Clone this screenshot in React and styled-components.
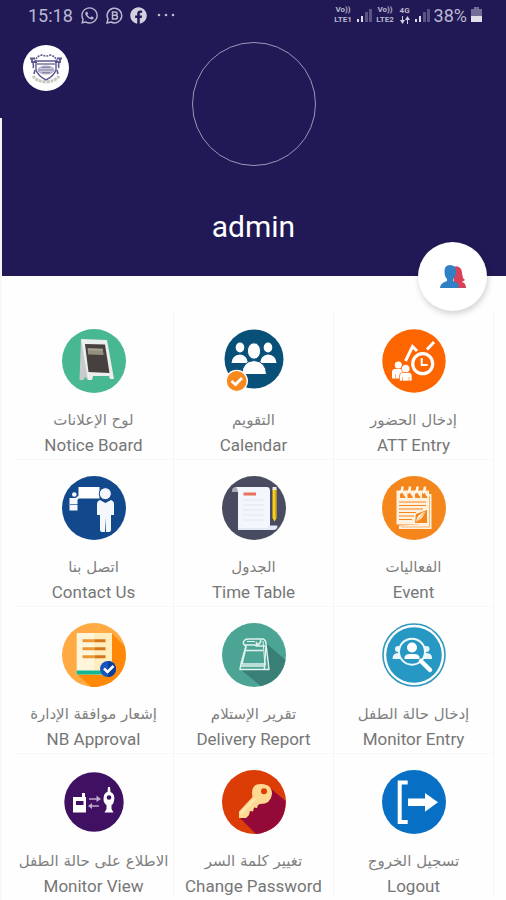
import React from 'react';
import styled, { createGlobalStyle } from 'styled-components';
import { FaWhatsapp, FaFacebook } from 'react-icons/fa';

const GlobalStyle = createGlobalStyle`
  * {
    box-sizing: border-box;
  }

  body {
    margin: 0;
    background: #fefefe;
    font-family: Roboto, 'DejaVu Sans', sans-serif;
  }
`;

const Page = styled.div`
  width: 100%;
  min-height: 100vh;
  border-left: 2px solid #f8f8f9;
`;

const Header = styled.header`
  position: relative;
  display: flex;
  flex-direction: column;
  height: 276px;
  margin-left: -2px;
  background-color: #201955;
  color: #fff;
`;

const StatusBar = styled.div`
  display: flex;
  justify-content: space-between;
  align-items: center;
  height: 30px;
  padding: 0 24px 0 28px;
  color: #bbb8cf;
  font-size: 18px;
`;

const StatusGroup = styled.div`
  display: flex;
  align-items: center;
  gap: ${(props) => props.$gap}px;

  svg {
    display: block;
    flex: none;
  }
`;

const NetworkLabel = styled.span`
  display: flex;
  flex-direction: column;
  align-items: center;
  min-width: ${(props) => props.$width}px;
  font-size: 8px;
  line-height: 10px;
  font-weight: 700;
`;

const HeaderBody = styled.div`
  display: grid;
  grid-template-columns: 46px 1fr 46px;
  padding: 12px 22px 0 23px;
`;

const LogoBadge = styled.div`
  width: 46px;
  height: 46px;
  margin-top: 3px;
  border-radius: 50%;
  background-color: #fff;
`;

const Profile = styled.div`
  display: flex;
  flex-direction: column;
  align-items: center;
`;

const Avatar = styled.div`
  width: 124px;
  height: 124px;
  border: 1px solid #9a96b8;
  border-radius: 50%;
`;

const UserName = styled.h1`
  margin: 43px 0 0;
  font-size: 30px;
  line-height: 36px;
  font-weight: 400;
`;

const ScrollMark = styled.div`
  position: absolute;
  left: 0;
  top: 118px;
  bottom: 0;
  width: 2px;
  background-color: #f4f4f8;
`;

const UsersButton = styled.button`
  position: absolute;
  right: 19px;
  bottom: -35px;
  display: flex;
  align-items: center;
  justify-content: center;
  width: 69px;
  height: 69px;
  padding: 0;
  border: 0;
  border-radius: 50%;
  background-color: #fff;
  box-shadow: 1px 3px 6px rgba(0, 0, 0, 0.18);
  cursor: pointer;
`;

const MenuGrid = styled.nav`
  display: grid;
  grid-template-columns: repeat(3, 1fr);
  padding: 37px 12px 0;
`;

const MenuItem = styled.button`
  display: flex;
  flex-direction: column;
  align-items: center;
  min-height: 147px;
  min-width: 0;
  padding: 16px 0 0;
  border: 0;
  border-right: 1px solid #f6f6f6;
  border-bottom: 1px solid #f8f8f8;
  background: none;
  color: #767676;
  font-family: inherit;
  font-size: 17px;
  line-height: 24px;
  white-space: nowrap;
  cursor: pointer;

  &:nth-last-child(-n + 3) {
    min-height: 0;
    border-bottom: 0;
  }

  svg {
    display: block;
    flex: none;
    margin-bottom: 15px;
  }
`;

const ArabicLabel = styled.span`
  font-family: 'DejaVu Sans', sans-serif;
  font-size: 15px;
  color: #808080;
`;

const Label = styled.span`
  margin-top: 1px;
`;

const Icon = ({ children }) => (
    <svg width="64" height="64" viewBox="0 0 64 64" aria-hidden="true">
        {children}
    </svg>
);

const SignalBars = () => (
    <svg width="15" height="14" viewBox="0 0 15 14" aria-hidden="true">
        <path d="M0 11h2v3H0zM4 8h2v6H4z" fill="#dddbe8" />
        <path d="M8 4h3v10H8zM12 1h3v13h-3z" fill="#5a5483" />
    </svg>
);

const SchoolCrest = () => (
    <svg width="46" height="46" viewBox="0 0 46 46" aria-hidden="true">
        <g fill="none" stroke="#5b5790">
            <path d="M12 17Q13 11 19 10Q23 12 27 10Q33 11 34 17" strokeWidth="1.6" strokeDasharray="2 1" />
            <path d="M7 13.500h5M34 13.500h5M9 14v3h5M37 14v3h-5" strokeWidth="1.800" />
            <path d="M13 16h20v9q-2 6-10 10q-8-4-10-10z" strokeWidth="1.400" />
            <path d="M10 18q1 3 0 5M36 18q-1 3 0 5M12 25l-1 4M34 25l1 4" strokeWidth="1.600" />
            <path d="M14 19h18" stroke="#77739f" strokeWidth="1.500" />
        </g>
        <ellipse cx="23" cy="25" rx="8" ry="4" fill="#c9c8d9" stroke="#8582a8" strokeWidth=".7" />
        <path d="M16 25h14M19 22.500h8M19 27.500h8" stroke="#77749e" strokeWidth=".8" />
        <path d="M10 31q3 5 13 6q10-1 13-6" fill="none" stroke="#c8c7c2" strokeWidth="3" strokeDasharray="3 .8" />
    </svg>
);

const NoticeBoardIcon = () => (
    <Icon>
        <circle cx="32" cy="32" r="32" fill="#48b892" />
        <path d="M19 10L17.500 51h4l1.500-3L26 51h2L26 12z" fill="#c8cbcb" />
        <path d="M19 10l26 1l7 39h-4l-1-3H31l-1 4h-4z" fill="#eceded" />
        <path d="M23 15l20 .5L47.500 44L26.500 43z" fill="#46413f" />
        <path d="M25.500 19l15 .5l1.200 6.500l-15.500-.5z" fill="#958f80" />
        <path d="M26.500 20.500l14.500.5" stroke="#aaa494" strokeWidth="1.500" />
    </Icon>
);

const CalendarIcon = () => (
    <Icon>
        <circle cx="32" cy="30" r="29.500" fill="#085078" />
        <g fill="#fff">
            <ellipse cx="18" cy="18.500" rx="4.300" ry="5" />
            <ellipse cx="46" cy="18.500" rx="4.300" ry="5" />
            <path d="M9.500 34q.5-8 8.500-8.500q7 .5 8 8.500zM38 34q1-8 8-8.500q8 .5 8.500 8.500z" />
            <path d="M20 45.500q0-13 12-14q12 1 12.500 14z" stroke="#085078" strokeWidth="1" />
            <ellipse cx="32" cy="22" rx="6.600" ry="8.200" stroke="#085078" strokeWidth="1" />
        </g>
        <circle cx="14.700" cy="52" r="11.300" fill="#fff" />
        <circle cx="14.700" cy="52" r="9.900" fill="#f7891f" />
        <path d="M9.500 52l4 3.500l6.500-6.500" fill="none" stroke="#fff" strokeWidth="2.800" />
    </Icon>
);

const AttendanceIcon = () => (
    <Icon>
        <circle cx="32" cy="32" r="31.700" fill="#fd6500" />
        <g fill="none" stroke="#fff" strokeWidth="3">
            <path d="M23.500 32l7-14.500l4.500 4.500M45 20.500l7-7.500" />
            <circle cx="40.700" cy="34.700" r="10" strokeWidth="3.200" />
            <path d="M39.700 29v7h6" strokeWidth="2" />
        </g>
        <g fill="#fff">
            <circle cx="16.300" cy="36" r="3.600" />
            <path d="M10 49.500v-6.500q0-3 3-3h7q2 0 2 3v6.500z" />
            <circle cx="23.700" cy="39.700" r="4.300" stroke="#fd6500" strokeWidth=".7" />
            <path d="M17.500 52v-5q0-3.500 3-3.500h6.500q3 0 3 3.500v5z" stroke="#fd6500" strokeWidth=".7" />
        </g>
        <path d="M13.500 45v4M20.500 48v4M27 48v4" stroke="#fd6500" strokeWidth=".5" />
    </Icon>
);

const ContactIcon = () => (
    <Icon>
        <circle cx="32" cy="32" r="32" fill="#12498c" />
        <path d="M16.500 11h21v11.500h-21z" fill="#fff" />
        <g fill="#f4f7fb">
            <circle cx="12.300" cy="18.500" r="2.300" />
            <path d="M7.500 22h6l4-3l1 1l-3 4v10.500h-8z" />
            <path d="M8 28.500h8" stroke="#12498c" strokeWidth=".7" />
            <circle cx="43.300" cy="17.700" r="6" stroke="#12498c" />
            <path d="M38 24l5.300 3L49 24q3 1 3 4v11h-3v15q0 2-2 2h-3l-.5-14l-.5 14h-3q-2 0-2-2V39h-3V28q0-3 3-4z" />
        </g>
    </Icon>
);

const TimeTableIcon = () => (
    <Icon>
        <circle cx="32" cy="32" r="32" fill="#494c61" />
        <path d="M10 15q0-4 4-4h5v5h-9z" fill="#a8adb8" />
        <path d="M14 11h31q3 0 3 4v38.500H16V16q0-3-2-5z" fill="#f3f6fc" />
        <path d="M47 49.500h8.500q0 4.500-4.500 4.500H16v-2h30z" fill="#e4eaf4" />
        <path d="M21.500 16.500h12.500v3H21.500z" fill="#e8705e" />
        <path d="M21 24h21M21 29h21M21 34h21M21 39h21M21 44h21" stroke="#e1e6ee" />
        <path d="M50.500 13h4v29l-2 3.500l-2-3.500z" fill="#f9cf19" />
        <path d="M50.500 11h4v3h-4z" fill="#eee5dc" />
        <path d="M53.500 14v28" stroke="#dba716" />
    </Icon>
);

const EventIcon = () => (
    <Icon>
        <circle cx="32" cy="32" r="32" fill="#f5861c" />
        <path d="M17 49.500v3.500h32.500V18H46v17L37 48.500z" fill="#fff1df" />
        <path d="M19 51h28.500V20" fill="none" stroke="#f5a95b" strokeWidth=".8" />
        <path d="M14.500 14.500h32.500v34H14.500z" fill="#fff1df" />
        <path d="M17 26h27M17 29.500h27M17 33h24M17 36.500h17M17 40h15M17 43.500h13" stroke="#f5861c" strokeWidth="1.200" />
        <path d="M18.500 15l4.500 6.500h-4.500zM26 15l4.500 6.500H26zM33.500 15l4.500 6.500h-4.500zM40.500 15l4.500 6.500h-4.500z" fill="#f5861c" stroke="#f5861c" />
        <path d="M18 17q2.500-2 2.500-6.500M25.500 17q2.500-2 2.500-6.500M33 17q2.500-2 2.500-6.500M40.500 17q2.500-2 2.500-6.500" fill="none" stroke="#fff7ea" strokeWidth="2.500" />
        <path d="M34 38l11-4v13H33z" fill="#f5861c" />
        <path d="M34 45.500q1-7 9-10q-2 8-9 10z" fill="#fff1df" />
        <path d="M35 45l7-8" stroke="#f5861c" strokeWidth=".7" />
    </Icon>
);

const ApprovalIcon = () => (
    <Icon>
        <circle cx="32" cy="32" r="32" fill="#ffaa42" />
        <path d="M49.500 10L62.500 23Q68 46 49 59Q39 65 29 64L15 51z" fill="#ff8907" />
        <path d="M14.700 10H50v41.500H14.700z" fill="#fff5db" />
        <path d="M32 10h18v41.500H32z" fill="#ffedbd" />
        <path d="M14.700 47.500H50v4H14.700z" fill="#13b793" />
        <path d="M20.500 17.700h12M20.500 25.700h12M20.500 33.700h12" stroke="#ed9733" strokeWidth="3" />
        <path d="M32.500 17.700h11M32.500 25.700h11M32.500 33.700h11" stroke="#d57516" strokeWidth="3" />
        <circle cx="46" cy="46" r="8" fill="#1456c0" />
        <path d="M46 38a8 8 0 0 1 0 16z" fill="#0b3f9c" />
        <path d="M42 45.500l3.500 3.500l6-6" fill="none" stroke="#fff" strokeWidth="2.500" />
    </Icon>
);

const DeliveryIcon = () => (
    <Icon>
        <circle cx="32" cy="32" r="32" fill="#4ca594" />
        <path d="M45 21L63.500 37Q60 57 39 63.200L18 46z" fill="#397e77" />
        <path d="M24 23h19l3 23H18z" fill="#4ca594" />
        <g fill="none" stroke="#e1f1ee" strokeWidth="1.500" strokeLinejoin="round">
            <path d="M24 23q-4-2-2-5q1-2 4-2h15q3 1 3 5l3 25.500H18l1-6z" />
            <path d="M22 22h12q4 0 5-5M34 19q2 3 0 4h9M24 24l-4 17h24M23 27.500h18M44 23l-1.500 20v3M18 43h25" />
            <path d="M25 18.500h8M20 41v-3M41 18l2 25" strokeWidth="1" />
        </g>
    </Icon>
);

const MonitorEntryIcon = () => (
    <Icon>
        <circle cx="32" cy="32" r="31" fill="#fff" stroke="#3298bd" strokeWidth="1.600" />
        <circle cx="32" cy="32" r="27.800" fill="#2798c4" />
        <g fill="#e8f6fa">
            <circle cx="16" cy="26" r="3" />
            <circle cx="44.500" cy="26" r="3" />
            <path d="M10.500 36q0-6 5.500-6t6 6zM38.500 36q0-6 6-6t5.500 6z" />
        </g>
        <circle cx="30" cy="28.700" r="13" fill="#2798c4" stroke="#eef9fc" strokeWidth="2" />
        <circle cx="30" cy="24.500" r="5" fill="#fff" />
        <path d="M22.500 36v-2q1-3 5-3h5q4 0 5 3v2z" fill="#fff" />
        <path d="M39 38l9 9" stroke="#fff" strokeWidth="4.500" strokeLinecap="round" />
    </Icon>
);

const MonitorViewIcon = () => (
    <Icon>
        <circle cx="32" cy="32" r="29.700" fill="#401063" />
        <path d="M11 27h9v-4h3v4h1v15.500H11z" fill="#fff" />
        <path d="M14 31h7.500v4H14z" fill="#401063" />
        <path d="M46 17h2l.5 5q5 2 3.500 9q-.5 3-2.500 4v4l2 3.500h-9l2-3.500v-4q-3-2-3-6q0-6 4-7z" fill="#fff" />
        <circle cx="47" cy="27.500" r="2.300" fill="#401063" />
        <path d="M27 29h10M37 36H27" stroke="#bda9cb" strokeWidth="1.500" />
        <path d="M34.500 25.500L39 29l-4.500 3zM30 33l-4 3l4 3z" fill="#bda9cb" />
    </Icon>
);

const PasswordIcon = () => (
    <Icon>
        <circle cx="32" cy="32" r="32" fill="#dc3c06" />
        <path d="M47 17L63.500 31Q64 54 44 61.500Q38 64 34 64L18 48z" fill="#930a39" />
        <path d="M30.500 27Q28 14 39 14q11 0 11 10q-1 10-12 10l-2 1l-1 3l-3-.5l-1 4l-3-.5l-1 4l-3 3h-7v-6.500z" fill="#ffd991" />
        <path d="M33 29L18.500 43.500" stroke="#ffe9b7" strokeWidth="2" />
        <circle cx="42" cy="21.300" r="3" fill="#dc3c06" />
    </Icon>
);

const LogoutIcon = () => (
    <Icon>
        <circle cx="32" cy="32" r="32" fill="#0870c4" />
        <path d="M25.700 12.500h-8v39.500h8" fill="none" stroke="#fff" strokeWidth="4" />
        <path d="M26 28.500h17V23l13 9.300l-13 9.400V36H26z" fill="#fff" />
    </Icon>
);

const menuItems = [
    { ar: 'لوح الإعلانات', en: 'Notice Board', icon: NoticeBoardIcon },
    { ar: 'التقويم', en: 'Calendar', icon: CalendarIcon },
    { ar: 'إدخال الحضور', en: 'ATT Entry', icon: AttendanceIcon },
    { ar: 'اتصل بنا', en: 'Contact Us', icon: ContactIcon },
    { ar: 'الجدول', en: 'Time Table', icon: TimeTableIcon },
    { ar: 'الفعاليات', en: 'Event', icon: EventIcon },
    { ar: 'إشعار موافقة الإدارة', en: 'NB Approval', icon: ApprovalIcon },
    { ar: 'تقرير الإستلام', en: 'Delivery Report', icon: DeliveryIcon },
    { ar: 'إدخال حالة الطفل', en: 'Monitor Entry', icon: MonitorEntryIcon },
    { ar: 'الاطلاع على حالة الطفل', en: 'Monitor View', icon: MonitorViewIcon },
    { ar: 'تغيير كلمة السر', en: 'Change Password', icon: PasswordIcon },
    { ar: 'تسجيل الخروج', en: 'Logout', icon: LogoutIcon },
];

const App = () => (
    <Page>
        <GlobalStyle />
        <Header>
            <StatusBar>
                <StatusGroup $gap={7}>
                    <span>15:18</span>
                    <FaWhatsapp size={19} />
                    <svg width="17" height="17" viewBox="0 0 17 17" aria-hidden="true">
                        <path d="M1 16l1-4A7.300 7.300 0 1 1 5 15z" fill="none" stroke="#bbb8cf" strokeWidth="1.500" />
                        <path d="M6.500 5h2.500q2 0 2 1.700q0 1.500-2 1.500q2.500 0 2.500 2q0 1.800-2.500 1.800H6.500zM6.500 8.200H9" fill="none" stroke="#bbb8cf" strokeWidth="1.500" />
                    </svg>
                    <FaFacebook size={17} color="#d3d1e0" />
                    <svg width="25" height="4" viewBox="0 0 25 4" aria-hidden="true">
                        <g fill="#bbb8cf">
                            <circle cx="5" cy="2" r="1.300" />
                            <circle cx="12" cy="2" r="1.300" />
                            <circle cx="19" cy="2" r="1.300" />
                        </g>
                    </svg>
                </StatusGroup>
                <StatusGroup $gap={4}>
                    <NetworkLabel $width={19}>
                        <span>Vo))</span>
                        <span>LTE1</span>
                    </NetworkLabel>
                    <SignalBars />
                    <NetworkLabel $width={19}>
                        <span>Vo))</span>
                        <span>LTE2</span>
                    </NetworkLabel>
                    <NetworkLabel $width={12}>
                        <span>4G</span>
                        <svg width="10" height="8" viewBox="0 0 10 8" aria-hidden="true">
                            <path d="M0 4h2V0h1v4h2L2.500 8zM5 4l2.500-4L10 4H8v4H7V4z" fill="#d0cede" />
                        </svg>
                    </NetworkLabel>
                    <SignalBars />
                    <span>38%</span>
                    <svg width="11" height="16" viewBox="0 0 11 16" aria-hidden="true">
                        <path d="M3 0h5v2h3v8H0V2h3z" fill="#736e96" />
                        <path d="M0 9h11v6H0z" fill="#e0dfe9" />
                    </svg>
                </StatusGroup>
            </StatusBar>
            <HeaderBody>
                <LogoBadge>
                    <SchoolCrest />
                </LogoBadge>
                <Profile>
                    <Avatar />
                    <UserName>admin</UserName>
                </Profile>
            </HeaderBody>
            <ScrollMark />
            <UsersButton type="button" aria-label="Users">
                <svg width="26" height="25" viewBox="0 0 26 25" aria-hidden="true">
                    <path d="M13 4q2-3 6-1q3 2 3 6l1 5l2 2l-3 2q4 1 4 6H14z" fill="#d9415b" />
                    <path d="M4.500 7q0-6 5.500-6q6 0 6 6q0 6-3 8v2q6 1 6 7H0q0-5 7-7v-2q-2.500-2-2.500-8z" fill="#2f80c4" />
                </svg>
            </UsersButton>
        </Header>
        <MenuGrid>
            {menuItems.map(({ ar, en, icon: ItemIcon }) => (
                <MenuItem key={en} type="button">
                    <ItemIcon />
                    <ArabicLabel lang="ar" dir="rtl">{ar}</ArabicLabel>
                    <Label>{en}</Label>
                </MenuItem>
            ))}
        </MenuGrid>
    </Page>
);

export default App;
